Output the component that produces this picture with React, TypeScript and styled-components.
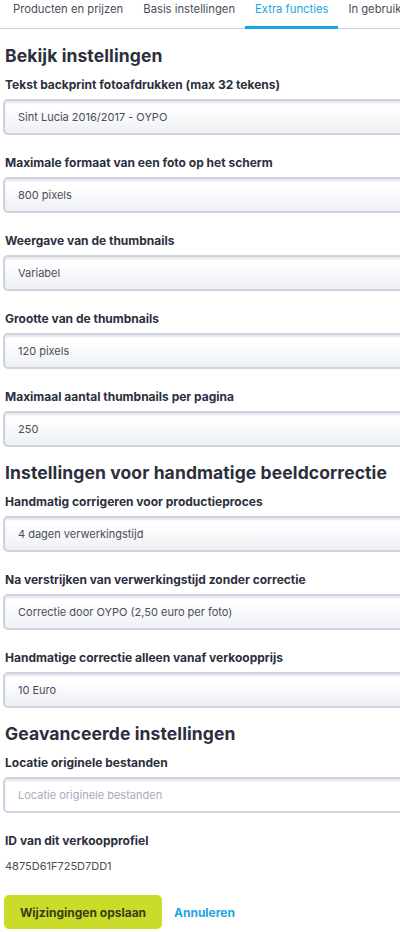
import React from "react";
import styled, { createGlobalStyle } from "styled-components";

const Global = createGlobalStyle`
  html, body { margin: 0; padding: 0; background: #fff; }
  body { font-family: "Inter", "Noto Sans", sans-serif; color: #2e3140; overflow: hidden; }
  * { box-sizing: border-box; }
`;

const Page = styled.div`
  width: 400px;
  overflow: hidden;
`;

const Tabs = styled.nav`
  display: flex;
  padding-left: 3px;
  border-bottom: 1px solid #cfd4de;
  height: 29px;
  white-space: nowrap;
`;

const Tab = styled.div<{ $active?: boolean }>`
  font-size: 11.25px;
  line-height: 16px;
  color: ${(p) => (p.$active ? "#17a6de" : "#4a4d5a")};
  padding: 1px 10px 0;
  height: 29px;
  margin-bottom: -1px;
  border-bottom: 3px solid ${(p) => (p.$active ? "#12a8df" : "transparent")};
`;

const Content = styled.div`
  display: flex;
  flex-direction: column;
  padding: 0 0 0 4px;
`;

const Heading = styled.h2<{ $first?: boolean }>`
  margin: ${(p) => (p.$first ? "16px" : "5px")} 0 0 1px;
  font-size: 17.5px;
  font-weight: 700;
  letter-spacing: 0.1px;
  color: #2c2f3d;
  line-height: 22px;
  white-space: nowrap;
`;

const Field = styled.div`
  display: flex;
  flex-direction: column;
  margin-top: 10px;
  margin-bottom: 10px;
`;

const Label = styled.label`
  font-size: 12px;
  font-weight: 700;
  line-height: 16px;
  color: #2c2f3d;
  margin-left: 1px;
  margin-bottom: 6px;
  white-space: nowrap;
`;

const Input = styled.div<{ $placeholder?: boolean }>`
  width: 430px;
  height: 36px;
  margin-left: -1px;
  border: 2px solid #cdd3df;
  border-radius: 5px;
  background: ${(p) =>
    p.$placeholder ? "#fff" : "linear-gradient(#ffffff 20%, #eef0f4 100%)"};
  box-shadow: inset 0 2px 2px rgba(150, 160, 180, 0.25);
  display: flex;
  align-items: center;
  padding-left: 13px;
  font-size: 11px;
  color: ${(p) => (p.$placeholder ? "#a7acbb" : "#4a4d5a")};
  white-space: nowrap;
`;

const Value = styled.div`
  font-size: 11px;
  line-height: 16px;
  color: #4a4d5a;
  margin-left: 1px;
  margin-top: 3px;
`;

const Actions = styled.div`
  display: flex;
  align-items: center;
  gap: 12px;
  margin-top: 11px;
`;

const Primary = styled.button`
  font-family: inherit;
  width: 158px;
  height: 34px;
  border: none;
  border-radius: 5px;
  background: #cadb2a;
  color: #383d17;
  font-weight: 700;
  font-size: 12px;
  padding: 0;
`;

const Link = styled.span`
  color: #1aa6e0;
  font-weight: 700;
  font-size: 12px;
`;

type F = { label: string; value: string; placeholder?: boolean };

const section1: F[] = [
  { label: "Tekst backprint fotoafdrukken (max 32 tekens)", value: "Sint Lucia 2016/2017 - OYPO" },
  { label: "Maximale formaat van een foto op het scherm", value: "800 pixels" },
  { label: "Weergave van de thumbnails", value: "Variabel" },
  { label: "Grootte van de thumbnails", value: "120 pixels" },
  { label: "Maximaal aantal thumbnails per pagina", value: "250" },
];

const section2: F[] = [
  { label: "Handmatig corrigeren voor productieproces", value: "4 dagen verwerkingstijd" },
  { label: "Na verstrijken van verwerkingstijd zonder correctie", value: "Correctie door OYPO (2,50 euro per foto)" },
  { label: "Handmatige correctie alleen vanaf verkoopprijs", value: "10 Euro" },
];

const FieldRow = ({ label, value, placeholder }: F) => (
  <Field>
    <Label>{label}</Label>
    <Input $placeholder={placeholder}>{value}</Input>
  </Field>
);

export default function App() {
  return (
    <Page>
      <Global />
      <Tabs>
        <Tab>Producten en prijzen</Tab>
        <Tab>Basis instellingen</Tab>
        <Tab $active>Extra functies</Tab>
        <Tab>In gebruik</Tab>
      </Tabs>
      <Content>
        <Heading $first>Bekijk instellingen</Heading>
        {section1.map((f) => (
          <FieldRow key={f.label} {...f} />
        ))}
        <Heading>Instellingen voor handmatige beeldcorrectie</Heading>
        {section2.map((f) => (
          <FieldRow key={f.label} {...f} />
        ))}
        <Heading>Geavanceerde instellingen</Heading>
        <FieldRow label="Locatie originele bestanden" value="Locatie originele bestanden" placeholder />
        <Field>
          <Label>ID van dit verkoopprofiel</Label>
          <Value>4875D61F725D7DD1</Value>
        </Field>
        <Actions>
          <Primary>Wijzingingen opslaan</Primary>
          <Link>Annuleren</Link>
        </Actions>
      </Content>
    </Page>
  );
}
